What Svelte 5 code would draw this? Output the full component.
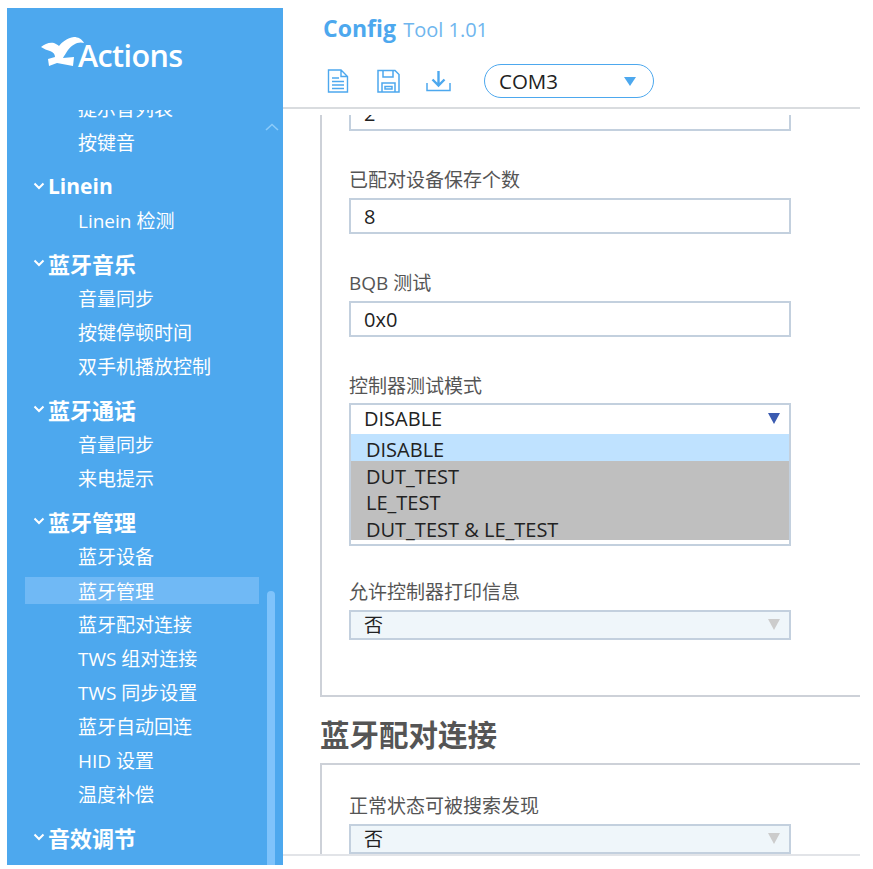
<script>
  const navGroups = [
    { items: ['提示音列表', '按键音'] },
    { title: 'Linein', items: ['Linein 检测'] },
    { title: '蓝牙音乐', items: ['音量同步', '按键停顿时间', '双手机播放控制'] },
    { title: '蓝牙通话', items: ['音量同步', '来电提示'] },
    {
      title: '蓝牙管理',
      items: ['蓝牙设备', '蓝牙管理', '蓝牙配对连接', 'TWS 组对连接', 'TWS 同步设置', '蓝牙自动回连', 'HID 设置', '温度补偿']
    },
    { title: '音效调节', items: [] }
  ];
  const activeItem = '蓝牙管理';

  const testModes = ['DISABLE', 'DUT_TEST', 'LE_TEST', 'DUT_TEST & LE_TEST'];
</script>

<div class="page">
  <aside class="sidebar">
    <div class="logo">
      <svg class="bird" viewBox="0 0 44 30" width="44" height="30" aria-hidden="true">
        <path fill="#fff" d="M0 10 C4 7 8 5 13 6 C15 7 17 8 18 9 C21 5 26 1 33 0 C37 0 41 2 43 6 C37 4 31 8 27 13 C25 16 23 19 22 21 L33 20 L32 29 L16 26 L8 29 L7 22 L14 20 C14 17 12 15 9 14 C6 13 3 12 0 10 Z" />
      </svg>
      <span class="logo-text">Actions</span>
    </div>
    <nav class="nav">
      {#each navGroups as group}
        <div class="group">
          {#if group.title}
            <div class="group-title" class:latin={group.title === 'Linein'}>
              <svg viewBox="0 0 12 8" width="12" height="8" aria-hidden="true">
                <path d="M1.5 1.5 L6 6 L10.5 1.5" fill="none" stroke="#fff" stroke-width="2" />
              </svg>
              {group.title}
            </div>
          {/if}
          {#each group.items as item}
            <div class="nav-item" class:active={group.title === '蓝牙管理' && item === activeItem}>{item}</div>
          {/each}
        </div>
      {/each}
      <svg class="scroll-up" viewBox="0 0 14 8" width="14" height="8" aria-hidden="true">
        <path d="M1 7 L7 1.5 L13 7" fill="none" stroke="#8ccbfa" stroke-width="1.6" />
      </svg>
      <div class="scroll-thumb"></div>
    </nav>
  </aside>

  <main class="main">
    <header class="header">
      <h1 class="title"><b>Config</b> <span>Tool 1.01</span></h1>
      <div class="toolbar">
        <svg class="tool doc" viewBox="0 0 22 24" width="22" height="24" aria-hidden="true">
          <path d="M1.5 1 H14 L20.5 7.5 V23 H1.5 Z M14 1 V7.5 H20.5 M5 9 H12 M5 12.5 H17 M5 16 H17 M5 19.5 H17" fill="none" stroke="#4da8ee" stroke-width="1.4" />
        </svg>
        <svg class="tool save" viewBox="0 0 23 24" width="23" height="24" aria-hidden="true">
          <path d="M1 1.5 H18 L22 5.5 V23 H1 Z M6 1.5 V8 H16 V1.5 M5 23 V14 H18 V23 M8 17.5 H15 V20 H8 Z" fill="none" stroke="#4da8ee" stroke-width="1.5" />
        </svg>
        <svg class="tool load" viewBox="0 0 25 22" width="25" height="22" aria-hidden="true">
          <path d="M1 13 V20.5 H24 V13" fill="none" stroke="#4da8ee" stroke-width="1.5" />
          <path d="M12.5 1 V14 M6.5 9.5 L12.5 15.5 L18.5 9.5" fill="none" stroke="#4da8ee" stroke-width="2.4" />
        </svg>
        <div class="port">
          <span>COM3</span>
          <i class="port-arrow"></i>
        </div>
      </div>
    </header>

    <div class="content">
      <section class="panel first">
        <div class="field">
          <label>连接设备个数</label>
          <div class="input">2</div>
        </div>
        <div class="field">
          <label>已配对设备保存个数</label>
          <div class="input">8</div>
        </div>
        <div class="field">
          <label>BQB 测试</label>
          <div class="input">0x0</div>
        </div>
        <div class="field open">
          <label>控制器测试模式</label>
          <div class="select-box">
            <div class="select-head">
              <span>DISABLE</span>
              <i class="arrow"></i>
            </div>
            <ul class="options">
              {#each testModes as mode, i}
                <li class:selected={i === 0}>{mode}</li>
              {/each}
            </ul>
          </div>
        </div>
        <div class="field">
          <label>允许控制器打印信息</label>
          <div class="select-disabled">
            <span>否</span>
            <i class="arrow gray"></i>
          </div>
        </div>
      </section>

      <h2 class="section-title">蓝牙配对连接</h2>

      <section class="panel">
        <div class="field">
          <label>正常状态可被搜索发现</label>
          <div class="select-disabled">
            <span>否</span>
            <i class="arrow gray"></i>
          </div>
        </div>
      </section>
    </div>
  </main>
</div>

<style>
  :global(body) {
    margin: 0;
    background: #fff;
  }

  .page {
    display: flex;
    height: 869px;
    box-sizing: border-box;
    padding: 8px 13px 4px 7px;
    font-family: "Open Sans", "Noto Sans CJK SC", sans-serif;
    overflow: hidden;
  }

  .sidebar {
    width: 276px;
    flex: none;
    display: flex;
    flex-direction: column;
    background: #4da8ee;
    color: #fff;
  }

  .logo {
    height: 102px;
    flex: none;
    box-sizing: border-box;
    padding: 28px 0 0 34px;
    display: flex;
    align-items: flex-start;
  }

  .bird {
    margin-top: 1px;
  }

  .logo-text {
    margin: 1px 0 0 -7px;
    font-size: 30.5px;
    line-height: 36px;
    font-weight: 600;
    letter-spacing: -0.6px;
  }

  .nav {
    position: relative;
    flex: 1;
    overflow: hidden;
  }

  .group {
    margin-bottom: 10px;
  }

  .group:first-child {
    margin-top: -18px;
  }

  .group:last-of-type {
    margin-top: -4px;
  }

  .group-title {
    height: 34px;
    box-sizing: border-box;
    padding: 0 0 4px 26px;
    display: flex;
    align-items: center;
    gap: 3px;
    font-size: 22px;
    font-weight: 700;
  }

  .group-title.latin {
    padding-bottom: 2px;
    font-size: 21px;
  }

  .nav-item {
    height: 34px;
    line-height: 35px;
    margin-left: 18px;
    margin-right: 24px;
    padding-left: 53px;
    font-size: 19px;
    white-space: nowrap;
  }

  .nav-item.active {
    height: 27px;
    line-height: 30px;
    margin-top: 3px;
    margin-bottom: 4px;
    background: #70b9f5;
  }

  .scroll-up {
    position: absolute;
    left: 258px;
    top: 13px;
  }

  .scroll-thumb {
    position: absolute;
    left: 260px;
    top: 481px;
    bottom: 0;
    width: 8px;
    border-radius: 4px 4px 0 0;
    background: #7fc3fb;
  }

  .main {
    flex: 1;
    min-width: 0;
    display: flex;
    flex-direction: column;
    margin-bottom: 9px;
    border-bottom: 2px solid #e2e4e8;
  }

  .header {
    height: 101px;
    flex: none;
    box-sizing: border-box;
    padding: 4px 0 0 40px;
    border-bottom: 2px solid #d9dcdf;
  }

  .title {
    margin: 0;
    font-size: 20px;
    line-height: 32px;
    font-weight: 400;
    color: #6fb6ee;
  }

  .title b {
    font-size: 23px;
    font-weight: 700;
    color: #4da8ee;
    margin-right: 2px;
  }

  .toolbar {
    display: flex;
    align-items: center;
    margin: 18px 0 0 4px;
  }

  .tool {
    flex: none;
  }

  .doc {
    margin-right: 28px;
  }

  .save {
    margin-right: 26px;
  }

  .load {
    margin-right: 33px;
  }

  .port {
    width: 170px;
    height: 34px;
    box-sizing: border-box;
    display: flex;
    align-items: center;
    justify-content: space-between;
    padding: 0 17px 0 14px;
    border: 1.5px solid #4da8ee;
    border-radius: 17px;
    font-size: 20.5px;
    color: #222;
  }

  .port-arrow {
    width: 0;
    height: 0;
    border-left: 6px solid transparent;
    border-right: 6px solid transparent;
    border-top: 9px solid #4da8ee;
  }

  .content {
    flex: 1;
    min-height: 0;
    overflow: hidden;
    margin-top: 6px;
    padding-left: 37px;
  }

  .panel {
    width: 600px;
    box-sizing: border-box;
    border: 2px solid #cdd1d8;
    border-right: 0;
    padding: 26px 0 0 27px;
  }

  .panel.first {
    margin-top: -81px;
    padding-bottom: 21px;
  }

  .field {
    margin-bottom: 34px;
  }

  .field.open {
    margin-bottom: 31px;
  }

  .field label {
    display: block;
    height: 30px;
    line-height: 30px;
    margin-bottom: 3px;
    font-size: 19px;
    color: #555;
    white-space: nowrap;
  }

  .input {
    width: 442px;
    height: 36px;
    line-height: 33px;
    box-sizing: border-box;
    padding-left: 13px;
    border: 2px solid #c3d0de;
    font-size: 20px;
    color: #222;
  }

  .select-box {
    width: 442px;
    margin-top: -1px;
    box-sizing: border-box;
    border: 2px solid #c3d0de;
    padding-bottom: 4px;
  }

  .select-head {
    height: 28px;
    box-sizing: border-box;
    padding: 0 9px 2px 13px;
    display: flex;
    align-items: center;
    justify-content: space-between;
    font-size: 20px;
    color: #222;
  }

  .arrow {
    width: 0;
    height: 0;
    border-left: 6px solid transparent;
    border-right: 6px solid transparent;
    border-top: 11px solid #3b5bb0;
  }

  .arrow.gray {
    border-top-color: #ccc;
  }

  .options {
    list-style: none;
    margin: 1px 0 0;
    padding: 0;
  }

  .options li {
    height: 26.5px;
    line-height: 31px;
    padding-left: 15px;
    background: #bfbfbf;
    font-size: 20px;
    color: #222;
  }

  .options li.selected {
    background: #bfe2ff;
  }

  .select-disabled {
    width: 442px;
    height: 30px;
    box-sizing: border-box;
    display: flex;
    align-items: center;
    justify-content: space-between;
    padding: 0 9px 2px 13px;
    border: 2px solid #c3d0de;
    background: #eff6fa;
    font-size: 19px;
    color: #222;
  }

  .section-title {
    margin: 0;
    height: 66px;
    line-height: 75px;
    font-size: 29.5px;
    font-weight: 700;
    color: #555;
  }
</style>
